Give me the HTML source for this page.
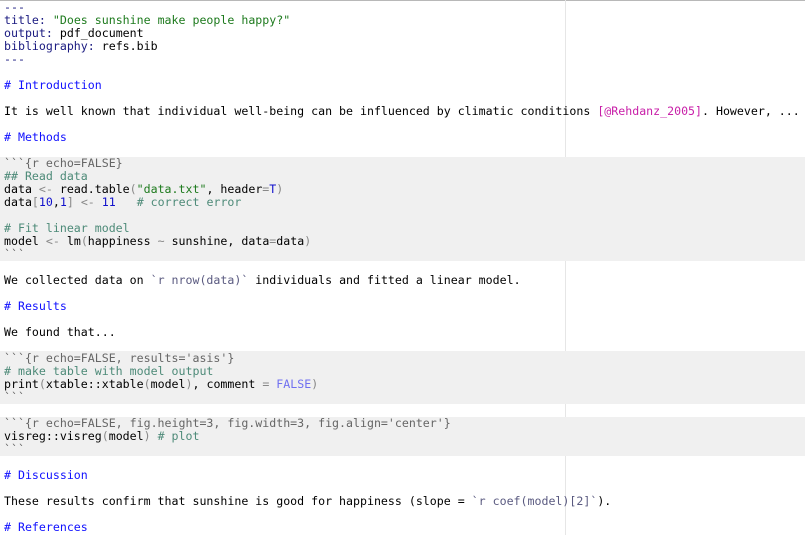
<!DOCTYPE html>
<html><head><style>
html,body{margin:0;padding:0;background:#fff;width:805px;height:535px;overflow:hidden;position:relative}
.top{position:absolute;left:0;top:0;width:805px;height:1px;background:#b8b8b8}
.margin{position:absolute;left:565px;top:0;width:1px;height:535px;background:#e6e6e6}
.chunk{position:absolute;left:0;width:805px;background:#f0f0f0}
pre{position:absolute;left:4px;top:1px;margin:0;font-family:"DejaVu Sans Mono","Liberation Mono",monospace;font-size:11.6px;line-height:13px;color:#000}
.k{color:#1a1a80}.s{color:#1d7a1d}.h{color:#1010ff}.c{color:#4d8a78}.o{color:#888}.n{color:#1010cc}.m{color:#c81fa8}.t{color:#7070f0}.g{color:#666}.ir{color:#5a5a80}
</style></head><body>
<div class="top"></div>
<div class="margin"></div>
<div class="chunk" style="top:157px;height:104px"></div>
<div class="chunk" style="top:351px;height:53px"></div>
<div class="chunk" style="top:417px;height:39px"></div>
<pre><span class="k">---</span>
<span class="k">title:</span> <span class="s">"Does sunshine make people happy?"</span>
<span class="k">output:</span> pdf_document
<span class="k">bibliography:</span> refs.bib
<span class="k">---</span>

<span class="h"># Introduction</span>

It is well known that individual well-being can be influenced by climatic conditions <span class="m">[@Rehdanz_2005]</span>. However, ...

<span class="h"># Methods</span>

<span class="g">&#96;&#96;&#96;{r echo=FALSE}</span>
<span class="c">## Read data</span>
data <span class="o">&lt;-</span> read.table<span class="o">(</span><span class="s">"data.txt"</span>, header<span class="o">=</span><span class="n">T</span><span class="o">)</span>
data<span class="o">[</span><span class="n">10</span>,<span class="n">1</span><span class="o">]</span> <span class="o">&lt;-</span> <span class="n">11</span>   <span class="c"># correct error</span>

<span class="c"># Fit linear model</span>
model <span class="o">&lt;-</span> lm<span class="o">(</span>happiness <span class="o">~</span> sunshine, data<span class="o">=</span>data<span class="o">)</span>
<span class="g">&#96;&#96;&#96;</span>

We collected data on <span class="ir">&#96;r nrow(data)&#96;</span> individuals and fitted a linear model.

<span class="h"># Results</span>

We found that...

<span class="g">&#96;&#96;&#96;{r echo=FALSE, results='asis'}</span>
<span class="c"># make table with model output</span>
print<span class="o">(</span>xtable::xtable<span class="o">(</span>model<span class="o">)</span>, comment <span class="o">=</span> <span class="t">FALSE</span><span class="o">)</span>
<span class="g">&#96;&#96;&#96;</span>

<span class="g">&#96;&#96;&#96;{r echo=FALSE, fig.height=3, fig.width=3, fig.align='center'}</span>
visreg::visreg<span class="o">(</span>model<span class="o">)</span> <span class="c"># plot</span>
<span class="g">&#96;&#96;&#96;</span>

<span class="h"># Discussion</span>

These results confirm that sunshine is good for happiness (slope = <span class="ir">&#96;r coef(model)[2]&#96;</span>).

<span class="h"># References</span>
</pre>
</body></html>
